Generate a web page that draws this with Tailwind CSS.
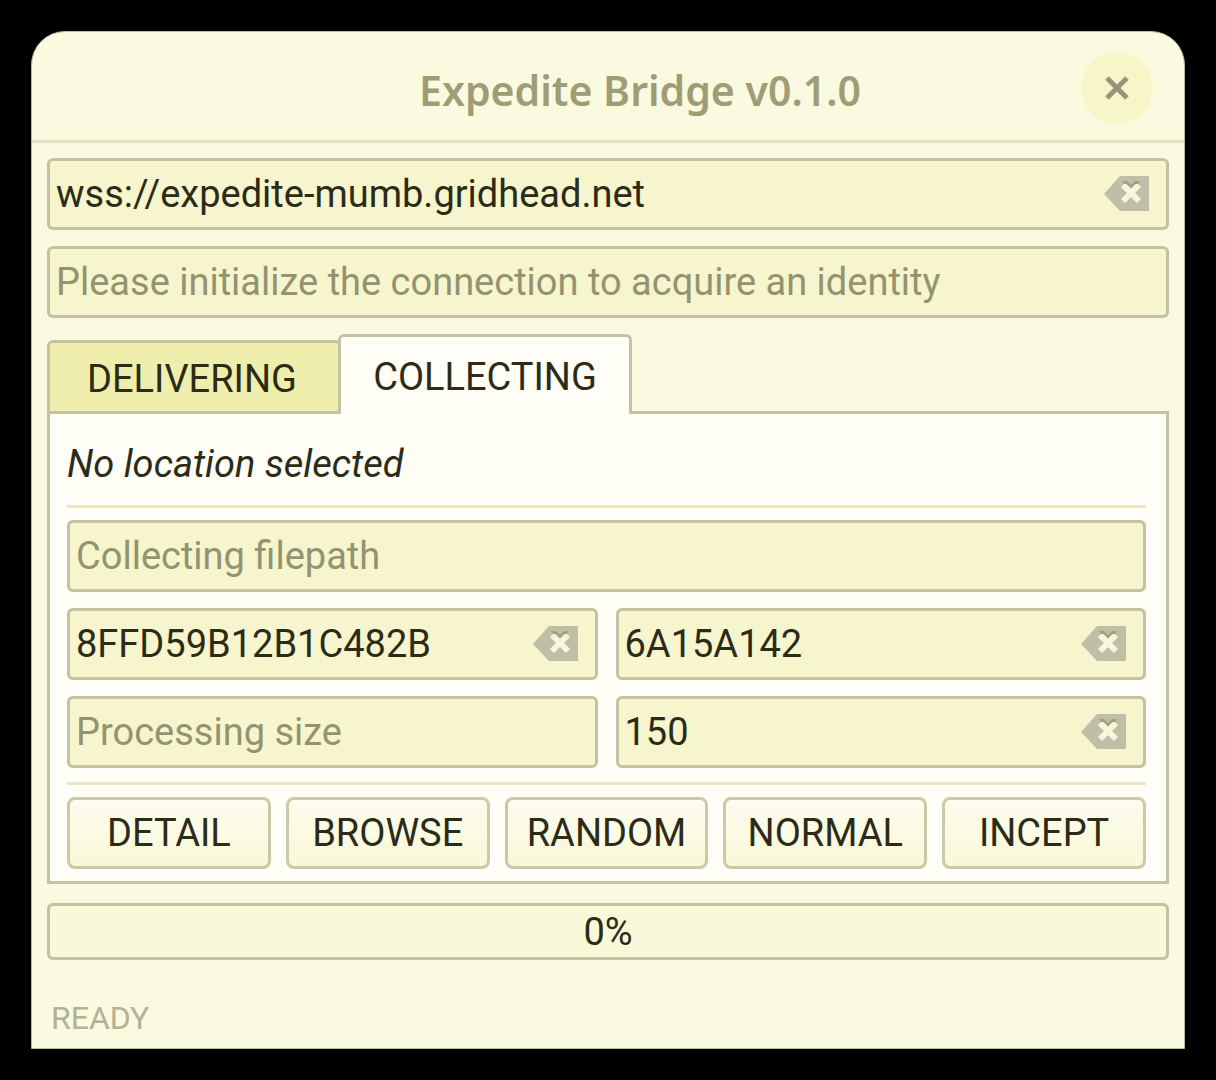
<!DOCTYPE html>
<html lang="en">
<head>
<meta charset="utf-8">
<meta name="viewport" content="width=device-width, initial-scale=1">
<title>Expedite Bridge v0.1.0</title>
<script src="https://cdn.jsdelivr.net/npm/@tailwindcss/browser@4"></script>
</head>
<body class="min-h-screen bg-black p-[31px] font-[Roboto,sans-serif] text-[38px] leading-[44px] text-[#2b2b18]">
<svg class="hidden" aria-hidden="true">
  <symbol id="clear" viewBox="0 0 46 36">
    <path fill="#bfbea6" d="M16 0H45V35H16L0 18Z"/>
    <path stroke="#f8f7dc" stroke-width="6" d="M19 9L35 25M35 9L19 25"/>
    <path fill="#a3a276" d="M18 5h5l4 4 4-4h5l-2 3h-3l-4 4-4-4h-3z"/>
  </symbol>
</svg>
<main class="rounded-t-[34px] border border-[#b9b89a] bg-[#fafae0]">
  <header class="flex h-[111px] items-center border-b-3 border-[#e2e1c0] pt-1 pr-[31px] pl-[167px]">
    <h1 class="flex-1 pt-1 text-center font-['Noto_Sans',sans-serif] text-[41px] font-semibold text-[#9e9d75]">Expedite Bridge v0.1.0</h1>
    <button type="button" aria-label="Close" class="flex size-[72px] items-center justify-center rounded-full bg-[#f7f6c8]">
      <svg class="size-6" viewBox="0 0 24 24" fill="none" stroke="#97967a" stroke-width="5"><path d="M2 2L22 22M22 2L2 22"/></svg>
    </button>
  </header>

  <div class="flex flex-col gap-4 px-[15px] pt-[15px]">
    <div class="flex h-[72px] items-center rounded-md border-3 border-[#c3c2a2] bg-[#f6f5cd] pr-4 pl-[6px]">
      <input type="text" aria-label="Server address" value="wss://expedite-mumb.gridhead.net" class="w-full min-w-0 flex-1 outline-none">
      <button type="button" aria-label="Clear server address"><svg class="h-9 w-[46px]"><use href="#clear"/></svg></button>
    </div>
    <div class="flex h-[72px] items-center rounded-md border-3 border-[#c3c2a2] bg-[#f6f5cd] px-[6px]">
      <input type="text" readonly aria-label="Identity" placeholder="Please initialize the connection to acquire an identity" class="w-full min-w-0 flex-1 outline-none placeholder:text-[#949370]">
    </div>

    <section>
      <div role="tablist" class="flex items-end">
        <button type="button" role="tab" aria-selected="false" class="h-[74px] w-[294px] rounded-t-md border-3 border-[#c3c2a2] bg-[#f0eeac] pt-1 pr-1">DELIVERING</button>
        <button type="button" role="tab" aria-selected="true" class="relative z-10 -ml-[3px] h-[80px] w-[294px] rounded-t-md border-3 border-b-0 border-[#c3c2a2] bg-[#fefdf6] pt-[2px]">COLLECTING</button>
      </div>
      <div role="tabpanel" class="-mt-[3px] border-3 border-[#c3c2a2] bg-[#fefdf6] pr-5 pb-3 pl-[17px]">
        <p class="flex h-[94px] items-center border-b-3 border-[#e8e7c0] pt-2 italic">No location selected</p>
        <div class="mt-3 grid grid-cols-2 gap-x-[18px] gap-y-4">
          <div class="col-span-2 flex h-[72px] items-center rounded-md border-3 border-[#c3c2a2] bg-[#f6f5cd] px-[6px]">
            <input type="text" aria-label="Collecting filepath" placeholder="Collecting filepath" class="w-full min-w-0 flex-1 outline-none placeholder:text-[#949370]">
          </div>
          <div class="flex h-[72px] items-center rounded-md border-3 border-[#c3c2a2] bg-[#f6f5cd] pr-4 pl-[6px]">
            <input type="text" aria-label="Password" value="8FFD59B12B1C482B" class="w-full min-w-0 flex-1 outline-none">
            <button type="button" aria-label="Clear password"><svg class="h-9 w-[46px]"><use href="#clear"/></svg></button>
          </div>
          <div class="flex h-[72px] items-center rounded-md border-3 border-[#c3c2a2] bg-[#f6f5cd] pr-4 pl-[6px]">
            <input type="text" aria-label="Target identity" value="6A15A142" class="w-full min-w-0 flex-1 outline-none">
            <button type="button" aria-label="Clear target identity"><svg class="h-9 w-[46px]"><use href="#clear"/></svg></button>
          </div>
          <div class="flex h-[72px] items-center rounded-md border-3 border-[#c3c2a2] bg-[#f6f5cd] px-[6px]">
            <input type="text" aria-label="Processing size" placeholder="Processing size" class="w-full min-w-0 flex-1 outline-none placeholder:text-[#949370]">
          </div>
          <div class="flex h-[72px] items-center rounded-md border-3 border-[#c3c2a2] bg-[#f6f5cd] pr-4 pl-[6px]">
            <input type="text" aria-label="Waiting time" value="150" class="w-full min-w-0 flex-1 outline-none">
            <button type="button" aria-label="Clear waiting time"><svg class="h-9 w-[46px]"><use href="#clear"/></svg></button>
          </div>
        </div>
        <div class="mt-[14px] grid grid-cols-5 gap-x-[15px] border-t-3 border-[#e8e7c0] pt-3">
          <button type="button" class="h-[72px] rounded-lg border-3 border-[#cbcaa8] bg-linear-to-b from-[#fdfcee] to-[#f9f8d8]">DETAIL</button>
          <button type="button" class="h-[72px] rounded-lg border-3 border-[#cbcaa8] bg-linear-to-b from-[#fdfcee] to-[#f9f8d8]">BROWSE</button>
          <button type="button" class="h-[72px] rounded-lg border-3 border-[#cbcaa8] bg-linear-to-b from-[#fdfcee] to-[#f9f8d8]">RANDOM</button>
          <button type="button" class="h-[72px] rounded-lg border-3 border-[#cbcaa8] bg-linear-to-b from-[#fdfcee] to-[#f9f8d8]">NORMAL</button>
          <button type="button" class="h-[72px] rounded-lg border-3 border-[#cbcaa8] bg-linear-to-b from-[#fdfcee] to-[#f9f8d8]">INCEPT</button>
        </div>
      </div>
    </section>

    <div role="progressbar" aria-valuenow="0" aria-valuemin="0" aria-valuemax="100" class="mt-[3px] flex h-[57px] items-center justify-center rounded-md border-3 border-[#c3c2a2] bg-[#f9f8d8]">0%</div>
  </div>

  <footer class="px-[19px] pt-[38px] pb-[10px] text-[32px] leading-10 text-[#b3b291]">READY</footer>
</main>
</body>
</html>
